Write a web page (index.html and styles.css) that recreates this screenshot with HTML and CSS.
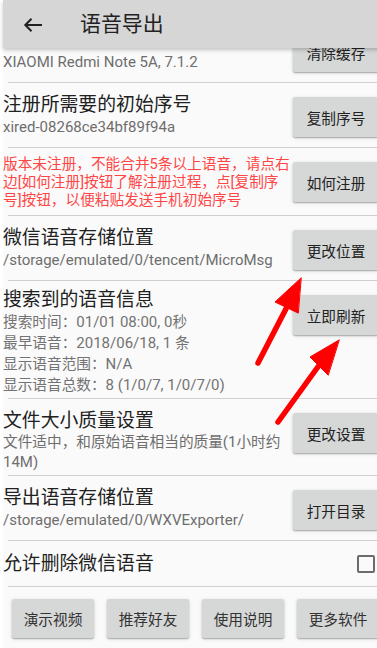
FILE: index.html
```html
<!DOCTYPE html>
<html lang="zh-CN">
<head>
<meta charset="utf-8">
<title>语音导出</title>
<link rel="stylesheet" href="styles.css">
</head>
<body>
<div class="page">
  <header class="appbar">
    <svg class="back" width="20" height="16" viewBox="0 0 20 16" aria-hidden="true">
      <path d="M19 8H2.5M8.5 1.8L2.3 8l6.2 6.2" fill="none" stroke="#222" stroke-width="2"/>
    </svg>
    <h1 class="appbar-title">语音导出</h1>
  </header>
  <main class="list">
    <div class="scroll">
      <section class="row">
        <div class="text text-scrolled">
          <div class="sub sub-latin">XIAOMI Redmi Note 5A, 7.1.2</div>
        </div>
        <button class="btn">清除缓存</button>
      </section>
      <hr class="divider">
      <section class="row">
        <div class="text">
          <div class="title">注册所需要的初始序号</div>
          <div class="sub sub-latin">xired-08268ce34bf89f94a</div>
        </div>
        <button class="btn">复制序号</button>
      </section>
      <hr class="divider">
      <section class="row">
        <div class="text text-warn">
          <div class="warn">版本未注册，不能合并5条以上语音，请点右边[如何注册]按钮了解注册过程，点[复制序号]按钮，以便粘贴发送手机初始序号</div>
        </div>
        <button class="btn">如何注册</button>
      </section>
      <hr class="divider">
      <section class="row">
        <div class="text">
          <div class="title">微信语音存储位置</div>
          <div class="sub sub-latin">/storage/emulated/0/tencent/MicroMsg</div>
        </div>
        <button class="btn">更改位置</button>
      </section>
      <hr class="divider">
      <section class="row">
        <div class="text text-info">
          <div class="title title-info">搜索到的语音信息</div>
          <div class="info">搜索时间：<span class="lat">01/01 08:00, 0</span>秒</div>
          <div class="info">最早语音：<span class="lat">2018/06/18, 1 </span>条</div>
          <div class="info">显示语音范围：<span class="lat">N/A</span></div>
          <div class="info">显示语音总数：<span class="lat">8 (1/0/7, 1/0/7/0)</span></div>
        </div>
        <button class="btn">立即刷新</button>
      </section>
      <hr class="divider">
      <section class="row">
        <div class="text text-quality">
          <div class="title">文件大小质量设置</div>
          <div class="sub sub-wrap">文件适中，和原始语音相当的质量<span class="lat">(1</span>小时约<span class="lat">14M)</span></div>
        </div>
        <button class="btn">更改设置</button>
      </section>
      <hr class="divider">
      <section class="row">
        <div class="text">
          <div class="title">导出语音存储位置</div>
          <div class="sub sub-latin">/storage/emulated/0/WXVExporter/</div>
        </div>
        <button class="btn">打开目录</button>
      </section>
      <hr class="divider">
      <section class="row row-toggle">
        <div class="title toggle-label">允许删除微信语音</div>
        <span class="checkbox" role="checkbox" aria-checked="false"></span>
      </section>
      <hr class="divider">
      <nav class="actions">
        <button class="btn btn-action">演示视频</button>
        <button class="btn btn-action">推荐好友</button>
        <button class="btn btn-action">使用说明</button>
        <button class="btn btn-action">更多软件</button>
      </nav>
    </div>
  </main>
</div>
<svg class="annot" width="377" height="648" viewBox="0 0 377 648" aria-hidden="true">
  <g fill="#ff0000" stroke="#ff0000" stroke-linecap="round" stroke-linejoin="round">
    <line x1="258" y1="363" x2="289" y2="303" stroke-width="5.5"/>
    <polygon points="301,278 275,302 298,313" stroke-width="1"/>
    <line x1="278" y1="422" x2="320" y2="364" stroke-width="5.5"/>
    <polygon points="339,340 310,357 328,375" stroke-width="1"/>
  </g>
</svg>
</body>
</html>
```

FILE: styles.css
```css
html, body {
  margin: 0;
  padding: 0;
}

body {
  width: 377px;
  height: 648px;
  overflow: hidden;
  background: #ffffff;
  font-family: Roboto, "Noto Sans CJK SC", sans-serif;
}

.page {
  margin-left: 3px;
  width: 380px;
  height: 648px;
  background: #fafafa;
  display: flex;
  flex-direction: column;
}

.appbar {
  position: relative;
  z-index: 2;
  flex: 0 0 48px;
  height: 48px;
  background: #d6d6d6;
  box-shadow: 0 2px 4px rgba(0, 0, 0, 0.22);
  display: flex;
  align-items: center;
}

.back {
  margin-left: 20px;
  margin-top: 2px;
  flex: 0 0 auto;
}

.appbar-title {
  margin: 0 0 0 37px;
  font-size: 20.9px;
  line-height: 24px;
  font-weight: 400;
  color: #222222;
}

.list {
  flex: 1;
  overflow: hidden;
}

.scroll {
  margin-top: -30px;
}

.row {
  display: flex;
  align-items: flex-start;
}

.text {
  flex: 1;
  min-width: 0;
  padding: 10px 0;
}

.text-scrolled {
  padding-top: 34px;
}

.text-warn {
  padding: 7px 0 6px;
}

.text-info {
  padding: 8px 0 2px;
}

.text-quality {
  padding: 10px 0 3px;
}

.title {
  font-size: 18.85px;
  line-height: 24px;
  color: #212121;
}

.title-info {
  line-height: 23px;
}

.sub {
  font-size: 14.66px;
  line-height: 20px;
  color: #6e6e6e;
  white-space: nowrap;
}

.sub-latin {
  font-size: 15px;
}

.sub-wrap {
  white-space: normal;
  line-height: 19.5px;
}

.lat {
  font-size: 15px;
}

.warn {
  font-size: 14.66px;
  line-height: 18px;
  color: #ff4646;
}

.info {
  font-size: 14.66px;
  line-height: 21px;
  color: #737373;
}

.btn {
  font-family: inherit;
  font-size: 14.66px;
  color: #222222;
  background: #d6d7d7;
  border: none;
  border-radius: 2px;
  padding: 0;
  box-shadow: 0 1px 1.5px rgba(0, 0, 0, 0.28), 0 1px 4px rgba(0, 0, 0, 0.12);
}

.row .btn {
  flex: 0 0 86px;
  width: 86px;
  height: 40px;
  margin: 14px 4px 0 2px;
}

.divider {
  margin: 0 0 0 5px;
  border: 0;
  height: 1px;
  background: #d0d0d0;
}

.row-toggle {
  align-items: center;
  height: 45px;
}

.toggle-label {
  flex: 1;
}

.checkbox {
  flex: 0 0 auto;
  box-sizing: border-box;
  width: 18px;
  height: 18px;
  margin-right: 8px;
  border: 2px solid #6b6b6b;
  border-radius: 2px;
}

.actions {
  display: flex;
  gap: 13px;
  padding: 12px 0 0 9px;
}

.btn-action {
  flex: 0 0 82px;
  width: 82px;
  height: 39px;
  color: #333333;
}

.annot {
  position: absolute;
  left: 0;
  top: 0;
  pointer-events: none;
}
```
